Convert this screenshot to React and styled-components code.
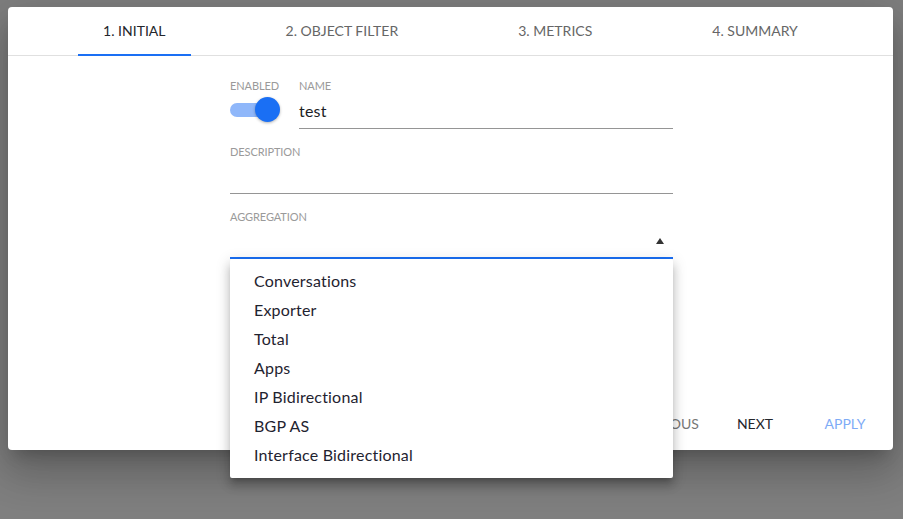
import React from "react";
import styled, { createGlobalStyle } from "styled-components";

const GlobalStyle = createGlobalStyle`
  html, body {
    margin: 0;
    padding: 0;
    background: #7f7f7f;
    font-family: Lato, "Open Sans", sans-serif;
  }
`;

const Page = styled.div`
  width: 903px;
  height: 519px;
  padding: 7px 10px 0 8px;
  box-sizing: border-box;
  overflow: hidden;
`;

const Dialog = styled.div`
  position: relative;
  width: 885px;
  height: 443px;
  background: #fff;
  border-radius: 4px;
  display: flex;
  flex-direction: column;
  box-shadow: 0 11px 15px -7px rgba(0, 0, 0, 0.2),
    0 24px 38px 3px rgba(0, 0, 0, 0.14), 0 9px 46px 8px rgba(0, 0, 0, 0.12);
`;

const Tabs = styled.div`
  display: flex;
  justify-content: space-evenly;
  height: 48px;
  border-bottom: 1px solid #e0e0e0;
  flex-shrink: 0;
`;

const Tab = styled.div`
  display: flex;
  align-items: center;
  justify-content: center;
  padding: 0 25px;
  font-size: 14px;
  text-transform: uppercase;
  color: ${props => (props.active ? "#24262b" : "#666")};
  border-bottom: 2px solid ${props => (props.active ? "#1a6ff4" : "transparent")};
  margin-bottom: -1px;
  box-sizing: border-box;
`;

const Body = styled.div`
  flex: 1;
  display: flex;
  justify-content: center;
  padding-top: 23px;
`;

const Form = styled.div`
  width: 443px;
  margin-left: 2px;
  display: flex;
  flex-direction: column;
  gap: 16px;
`;

const Row = styled.div`
  display: flex;
  gap: 19px;
`;

const Field = styled.div`
  position: relative;
  flex: ${props => (props.grow ? 1 : "none")};
  width: ${props => props.width || "auto"};
  display: flex;
  flex-direction: column;
`;

const Label = styled.div`
  font-size: 11px;
  line-height: 14px;
  height: 14px;
  text-transform: uppercase;
  color: #9a9a9a;
  letter-spacing: -0.1px;
`;

const Input = styled.div`
  position: relative;
  height: ${props => (props.focused ? "33px" : "34px")};
  padding-bottom: ${props => (props.tall ? "1px" : "0")};
  border-bottom: ${props => (props.focused ? "2px solid #1a6ff4" : "1px solid #959595")};
  display: flex;
  align-items: center;
  font-size: 16px;
  letter-spacing: 0.2px;
  color: #1c1e24;
`;

const ToggleWrap = styled.div`
  height: 34px;
  display: flex;
  align-items: center;
`;

const Track = styled.div`
  position: relative;
  width: 44px;
  height: 14px;
  border-radius: 7px;
  background: #8fb7fa;
`;

const Thumb = styled.div`
  position: absolute;
  right: -6px;
  top: -6px;
  width: 25px;
  height: 25px;
  border-radius: 50%;
  background: #1a6ff4;
  box-shadow: 0 1px 3px rgba(0, 0, 0, 0.3);
`;

const Caret = styled.span`
  position: absolute;
  right: 9px;
  top: 50%;
  margin-top: -3px;
  width: 0;
  height: 0;
  border-left: 4px solid transparent;
  border-right: 4px solid transparent;
  border-bottom: 6px solid #333;
`;

const Footer = styled.div`
  display: flex;
  justify-content: flex-end;
  gap: 2px;
  padding: 0 4px 9px 0;
`;

const Button = styled.button`
  min-width: 88px;
  height: 36px;
  padding: 0 8px;
  border: none;
  background: transparent;
  font-family: inherit;
  font-size: 14px;
  text-transform: uppercase;
  color: ${props => props.color || "#24262b"};
`;

const Menu = styled.ul`
  position: absolute;
  left: 222px;
  top: 252px;
  width: 443px;
  margin: 0;
  padding: 7px 0 9px;
  list-style: none;
  background: #fff;
  border-radius: 2px;
  z-index: 10;
  box-shadow: 0 5px 5px -3px rgba(0, 0, 0, 0.2), 0 8px 10px 1px rgba(0, 0, 0, 0.14),
    0 3px 14px 2px rgba(0, 0, 0, 0.12);
`;

const MenuItem = styled.li`
  height: 29px;
  line-height: 29px;
  padding-left: 24px;
  font-size: 16px;
  letter-spacing: 0.2px;
  color: #1f2330;
`;

const steps = ["1. Initial", "2. Object Filter", "3. Metrics", "4. Summary"];
const aggregations = [
  "Conversations",
  "Exporter",
  "Total",
  "Apps",
  "IP Bidirectional",
  "BGP AS",
  "Interface Bidirectional"
];

export default function App() {
  return (
    <>
      <GlobalStyle />
      <Page>
        <Dialog>
          <Tabs>
            {steps.map((s, i) => (
              <Tab key={s} active={i === 0}>{s}</Tab>
            ))}
          </Tabs>
          <Body>
            <Form>
              <Row>
                <Field width="50px">
                  <Label>Enabled</Label>
                  <ToggleWrap>
                    <Track>
                      <Thumb />
                    </Track>
                  </ToggleWrap>
                </Field>
                <Field grow>
                  <Label>Name</Label>
                  <Input tall>test</Input>
                </Field>
              </Row>
              <Field>
                <Label>Description</Label>
                <Input />
              </Field>
              <Field>
                <Label>Aggregation</Label>
                <Input focused>
                  <Caret />
                </Input>
              </Field>
            </Form>
          </Body>
          <Footer>
            <Button color="#777">Previous</Button>
            <Button>Next</Button>
            <Button color="#7eabf6">Apply</Button>
          </Footer>
          <Menu>
            {aggregations.map(a => (
              <MenuItem key={a}>{a}</MenuItem>
            ))}
          </Menu>
        </Dialog>
      </Page>
    </>
  );
}
